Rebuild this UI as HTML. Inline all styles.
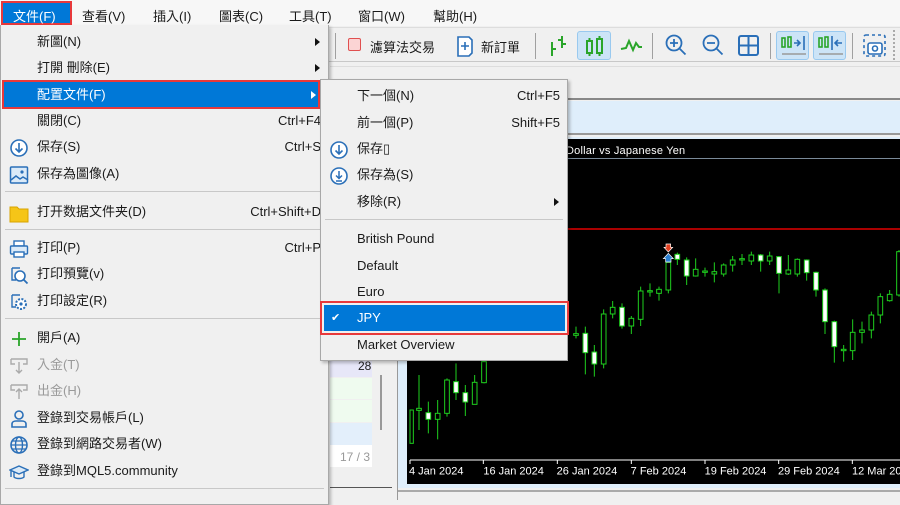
<!DOCTYPE html>
<html><head><meta charset="utf-8">
<style>
*{margin:0;padding:0;box-sizing:border-box}
body{width:900px;height:500px;overflow:hidden;background:#f0f0f0;position:relative;font-family:"Liberation Sans","Noto Sans CJK TC",sans-serif;font-size:13px;color:#1a1a1a}
.abs{position:absolute}
.mb{position:absolute;top:0;left:0;width:900px;height:26px;background:#f7f7f7}
.mb span{position:absolute;top:6px;font-size:13px}
.tb{position:absolute;top:27px;left:0;width:900px;height:35px;background:#f0f0f0;border-top:1px solid #ddd;border-bottom:1px solid #c8c8c8}
.sep{position:absolute;top:33px;width:1px;height:26px;background:#a0a0a0}
.hl{position:absolute;top:31px;height:29px;background:#cce4f7;border:1px solid #99c9ef;border-radius:3px}
.menu{position:absolute;background:#f0f0f0;border:1px solid #a8a8a8;box-shadow:2px 2px 3px rgba(0,0,0,.25)}
.it{position:absolute;left:0;right:0;height:26px;line-height:26px}
.it .t{position:absolute;left:36px}
.it .s{position:absolute;right:7px}
.it .ar{position:absolute;right:8px;top:9px;width:0;height:0;border-left:5px solid #111;border-top:4px solid transparent;border-bottom:4px solid transparent}
.msep{position:absolute;left:4px;right:4px;height:1px;background:#c8c8c8}
.dis{color:#9a9a9a}
.ic{position:absolute;left:8px;top:4px}
</style></head><body>

<div class="mb">
 <div class="abs" style="left:1px;top:1px;width:71px;height:24px;border:2px solid #e8393b;background:#0078d7"></div>
 <span style="left:13px;color:#fff">文件(F)</span>
 <span style="left:82px">查看(V)</span>
 <span style="left:153px">插入(I)</span>
 <span style="left:219px">圖表(C)</span>
 <span style="left:289px">工具(T)</span>
 <span style="left:358px">窗口(W)</span>
 <span style="left:433px">幫助(H)</span>
</div>

<div class="tb"></div>
<div class="sep" style="left:335px"></div>
<div class="abs" style="left:348px;top:38px;width:13px;height:13px;border:1.5px solid #e05050;background:#fbd4d4;border-radius:2px"></div>
<span class="abs" style="left:370px;top:37px">濾算法交易</span>
<svg class="abs" style="left:456px;top:35px" width="18" height="22"><path d="M2 2h11l3 3v13l-3 3H2z" fill="#fff" stroke="#2a6fb8" stroke-width="1.6"/><path d="M9 7v8M5 11h8" stroke="#2a6fb8" stroke-width="1.6"/></svg>
<span class="abs" style="left:481px;top:37px">新訂單</span>
<div class="sep" style="left:535px"></div>
<svg class="abs" style="left:548px;top:34px" width="20" height="22"><path d="M4 8v14M4 15h4M14 2v12M10 6h4M14 10h4" stroke="#2aa52a" stroke-width="2" fill="none"/></svg>
<div class="hl" style="left:577px;width:34px"></div>
<svg class="abs" style="left:584px;top:33px" width="22" height="26"><rect x="3" y="8" width="5" height="12" fill="none" stroke="#2aa52a" stroke-width="2"/><rect x="13" y="6" width="5" height="14" fill="none" stroke="#2aa52a" stroke-width="2"/><path d="M5.5 5v3M5.5 20v3M15.5 3v3M15.5 20v3" stroke="#2aa52a" stroke-width="2"/></svg>
<svg class="abs" style="left:620px;top:36px" width="22" height="18"><path d="M1 13l5-1 3-7 4 9 3-7 3 4h3" stroke="#2aa52a" stroke-width="2" fill="none"/></svg>
<div class="sep" style="left:652px"></div>
<svg class="abs" style="left:664px;top:33px" width="24" height="24"><circle cx="10" cy="10" r="7.5" fill="none" stroke="#2a6fb8" stroke-width="1.8"/><path d="M10 6v8M6 10h8M15.5 15.5l6 6" stroke="#2a6fb8" stroke-width="1.8"/></svg>
<svg class="abs" style="left:701px;top:33px" width="24" height="24"><circle cx="10" cy="10" r="7.5" fill="none" stroke="#2a6fb8" stroke-width="1.8"/><path d="M6 10h8M15.5 15.5l6 6" stroke="#2a6fb8" stroke-width="1.8"/></svg>
<svg class="abs" style="left:738px;top:35px" width="22" height="22"><rect x="1" y="1" width="19" height="19" rx="2" fill="none" stroke="#2a6fb8" stroke-width="2"/><path d="M10.5 1v19M1 10.5h19" stroke="#2a6fb8" stroke-width="2"/></svg>
<div class="sep" style="left:770px"></div>
<div class="hl" style="left:776px;width:33px"></div>
<div class="hl" style="left:813px;width:33px"></div>
<svg class="abs" style="left:780px;top:33px" width="28" height="26"><rect x="2" y="5" width="3" height="9" fill="none" stroke="#2aa52a" stroke-width="1.6"/><rect x="8" y="4" width="3" height="10" fill="none" stroke="#2aa52a" stroke-width="1.6"/><path d="M14 10h6M17 7l3 3-3 3" stroke="#2a6fb8" stroke-width="1.6" fill="none"/><path d="M24 3v14" stroke="#2a6fb8" stroke-width="1.6"/><path d="M2 21h24" stroke="#999" stroke-width="1.6"/></svg>
<svg class="abs" style="left:817px;top:33px" width="28" height="26"><rect x="2" y="5" width="3" height="9" fill="none" stroke="#2aa52a" stroke-width="1.6"/><rect x="8" y="4" width="3" height="10" fill="none" stroke="#2aa52a" stroke-width="1.6"/><path d="M15 3v14" stroke="#2a6fb8" stroke-width="1.6"/><path d="M18 10h7M21 7l-3 3 3 3" stroke="#2a6fb8" stroke-width="1.6" fill="none"/><path d="M2 21h24" stroke="#999" stroke-width="1.6"/></svg>
<div class="sep" style="left:852px"></div>
<svg class="abs" style="left:862px;top:33px" width="26" height="26"><rect x="2" y="2" width="21" height="21" rx="2" fill="none" stroke="#2a6fb8" stroke-width="1.6" stroke-dasharray="3 3"/><rect x="6" y="10" width="14" height="11" rx="2" fill="#fff" stroke="#2a6fb8" stroke-width="1.6"/><circle cx="13" cy="15.5" r="2.5" fill="none" stroke="#2a6fb8" stroke-width="1.6"/></svg>
<div class="abs" style="left:893px;top:30px;width:2px;height:30px;border-left:2px dotted #aaa"></div>

<div class="abs" style="left:328px;top:63px;width:572px;height:437px;background:#f0f0f0"></div>
<div class="abs" style="left:330px;top:66px;width:570px;height:1px;background:#ddd"></div>
<div class="abs" style="left:330px;top:361px;width:42px;height:16px;background:#e7e7f8"></div>
<div class="abs" style="left:330px;top:378px;width:42px;height:21px;background:#effbef"></div>
<div class="abs" style="left:330px;top:400px;width:42px;height:22px;background:#effbef"></div>
<div class="abs" style="left:330px;top:423px;width:42px;height:22px;background:#e3effb"></div>
<div class="abs" style="left:330px;top:445px;width:42px;height:22px;background:#fff"></div>
<span class="abs" style="left:358px;top:359px;font-size:12px">28</span>
<span class="abs" style="left:340px;top:450px;font-size:12px;color:#999">17 / 3</span>
<div class="abs" style="left:380px;top:375px;width:2px;height:55px;background:#999"></div>
<div class="abs" style="left:330px;top:487px;width:62px;height:1px;background:#555"></div>

<div class="abs" style="left:397px;top:98px;width:503px;height:402px;background:#f0f0f0;border-left:1px solid #999;border-top:2px solid #888"></div>
<div class="abs" style="left:398px;top:101px;width:502px;height:34px;background:#dfeefb;border-bottom:2px solid #999"></div>
<div class="abs" style="left:398px;top:137px;width:502px;height:351px;background:#dfeefb"></div>
<div class="abs" style="left:407px;top:139px;width:493px;height:345px;background:#000"></div>
<div class="abs" style="left:407px;top:158px;width:493px;height:1px;background:#7a8a99"></div>
<div class="abs" style="left:407px;top:228px;width:493px;height:2px;background:#a00"></div>
<span class="abs" style="left:566px;top:145px;font-size:11px;color:#fff;letter-spacing:.2px">Dollar vs Japanese Yen</span>
<svg class="abs" style="left:400px;top:230px" width="500" height="270" viewBox="0 0 1500 810">
<g stroke="#1ecf1e" stroke-width="3" fill="#000">
<path d="M35 540V640M57 435V600M85 515V610M113 510V628M141 445V560M168 400V510M196 465V558M224 435V523M252 380V460M528 290V325M556 290V433M583 345V440M611 238V415M638 213V265M666 220V296M694 258V312M722 170V288M750 160V200M777 170V212M805 85V190M832 68V105M860 82V165M887 85V140M915 113V140M943 97V157M971 100V140M998 78V125M1026 72V105M1054 65V105M1082 72V125M1109 65V105M1137 78V190M1165 75V135M1192 85V140M1220 88V152M1248 125V200M1275 175V312M1303 272V398M1331 345V395M1358 268V390M1386 275V340M1414 245V325M1441 190V280M1469 180V215M1497 60V200"/>
<rect x="30" y="540" width="10" height="100"/>
<rect x="50" y="535" width="14" height="6"/>
<rect x="78" y="548" width="14" height="20" fill="#fff"/>
<rect x="106" y="550" width="14" height="18"/>
<rect x="134" y="450" width="14" height="100"/>
<rect x="161" y="455" width="14" height="33" fill="#fff"/>
<rect x="189" y="488" width="14" height="28" fill="#fff"/>
<rect x="217" y="457" width="14" height="66"/>
<rect x="245" y="395" width="14" height="63"/>
<rect x="521" y="311" width="14" height="5"/>
<rect x="549" y="310" width="14" height="58" fill="#fff"/>
<rect x="576" y="366" width="14" height="36" fill="#fff"/>
<rect x="604" y="252" width="14" height="150"/>
<rect x="631" y="232" width="14" height="20"/>
<rect x="659" y="232" width="14" height="56" fill="#fff"/>
<rect x="687" y="265" width="14" height="23"/>
<rect x="715" y="183" width="14" height="85"/>
<rect x="743" y="182" width="14" height="4"/>
<rect x="770" y="178" width="14" height="12"/>
<rect x="798" y="97" width="14" height="83"/>
<rect x="825" y="73" width="14" height="15" fill="#fff"/>
<rect x="853" y="90" width="14" height="48" fill="#fff"/>
<rect x="880" y="118" width="14" height="20"/>
<rect x="908" y="123" width="14" height="4"/>
<rect x="936" y="125" width="14" height="7"/>
<rect x="964" y="105" width="14" height="27"/>
<rect x="991" y="90" width="14" height="15"/>
<rect x="1019" y="86" width="14" height="4"/>
<rect x="1047" y="75" width="14" height="18"/>
<rect x="1075" y="75" width="14" height="18" fill="#fff"/>
<rect x="1102" y="78" width="14" height="15"/>
<rect x="1130" y="80" width="14" height="50" fill="#fff"/>
<rect x="1158" y="120" width="14" height="12"/>
<rect x="1185" y="88" width="14" height="44"/>
<rect x="1213" y="90" width="14" height="38" fill="#fff"/>
<rect x="1241" y="127" width="14" height="53" fill="#fff"/>
<rect x="1268" y="180" width="14" height="95" fill="#fff"/>
<rect x="1296" y="275" width="14" height="75" fill="#fff"/>
<rect x="1324" y="358" width="14" height="4"/>
<rect x="1351" y="307" width="14" height="55"/>
<rect x="1379" y="300" width="14" height="7"/>
<rect x="1407" y="255" width="14" height="45"/>
<rect x="1434" y="200" width="14" height="55"/>
<rect x="1462" y="193" width="14" height="19"/>
<rect x="1490" y="65" width="14" height="130"/>
</g>
<path d="M798 42h14v10h6l-13 14-13-14h6z" fill="#e04020" stroke="#fff" stroke-width="2"/>
<path d="M790 86l15-16 15 16h-7v10h-16v-10z" fill="#2a7fd0" stroke="#fff" stroke-width="2"/>
<path d="M30 690H1500" stroke="#fff" stroke-width="3"/>
<path d="M30 690v12M250 690v12M472 690v12M694 690v12M915 690v12M1136 690v12M1357 690v12" stroke="#fff" stroke-width="3"/>
<g fill="#fff" font-size="33" font-family="Liberation Sans, sans-serif">
<text x="27" y="734">4 Jan 2024</text><text x="250" y="734">16 Jan 2024</text><text x="470" y="734">26 Jan 2024</text><text x="692" y="734">7 Feb 2024</text><text x="914" y="734">19 Feb 2024</text><text x="1134" y="734">29 Feb 2024</text><text x="1356" y="734">12 Mar 2024</text>
</g>
</svg>
<div class="abs" style="left:398px;top:490px;width:502px;height:2px;background:#aaa"></div>

<div class="menu" style="left:0;top:25px;width:329px;height:480px;border-top:none">
 <div class="it" style="top:4px"><span class="t">新圖(N)</span><span class="ar"></span></div>
 <div class="it" style="top:30px"><span class="t">打開 刪除(E)</span><span class="ar"></span></div>
 <div class="abs" style="left:1px;top:55px;width:318px;height:29px;border:2px solid #e8393b;background:#0078d7"></div>
 <div class="it" style="top:57px;color:#fff"><span class="t">配置文件(F)</span><span class="ar" style="border-left-color:#fff;right:12px"></span></div>
 <div class="it" style="top:83px"><span class="t">關閉(C)</span><span class="s">Ctrl+F4</span></div>
 <div class="it" style="top:109px"><svg class="ic" width="20" height="20"><circle cx="10" cy="10" r="8" fill="#fff" stroke="#2a6fb8" stroke-width="1.6"/><path d="M10 5v9M6.5 10.5L10 14l3.5-3.5" stroke="#2a6fb8" stroke-width="1.6" fill="none"/></svg><span class="t">保存(S)</span><span class="s">Ctrl+S</span></div>
 <div class="it" style="top:136px"><svg class="ic" width="20" height="20"><rect x="1.5" y="2" width="17" height="16" rx="1" fill="#dbeaf8" stroke="#2a6fb8" stroke-width="1.5"/><path d="M2 15l5-4 4 3 3-2 5 3" stroke="#2a6fb8" stroke-width="1.5" fill="none"/><circle cx="13" cy="7" r="1.6" fill="#2a6fb8"/></svg><span class="t">保存為圖像(A)</span></div>
 <div class="msep" style="top:166px"></div>
 <div class="it" style="top:174px"><svg class="ic" width="20" height="20" style="top:5px"><path d="M1 3h7l2 2h9v13H1z" fill="#f5c518" stroke="#d9a400"/></svg><span class="t">打开数据文件夹(D)</span><span class="s">Ctrl+Shift+D</span></div>
 <div class="msep" style="top:204px"></div>
 <div class="it" style="top:210px"><svg class="ic" width="20" height="20"><rect x="5" y="2" width="10" height="5" fill="#fff" stroke="#2a6fb8" stroke-width="1.4"/><rect x="1.5" y="7" width="17" height="8" rx="1" fill="#dbeaf8" stroke="#2a6fb8" stroke-width="1.4"/><rect x="5" y="13" width="10" height="5" fill="#fff" stroke="#2a6fb8" stroke-width="1.4"/></svg><span class="t">打印(P)</span><span class="s">Ctrl+P</span></div>
 <div class="it" style="top:236px"><svg class="ic" width="20" height="20"><path d="M3 3h8M3 3v12h4" stroke="#2a6fb8" stroke-width="1.4" fill="none"/><circle cx="11" cy="11" r="5" fill="#fff" stroke="#2a6fb8" stroke-width="1.6"/><path d="M14.5 14.5l4 4" stroke="#2a6fb8" stroke-width="1.8"/></svg><span class="t">打印預覽(v)</span></div>
 <div class="it" style="top:263px"><svg class="ic" width="20" height="20"><path d="M3 3h8M3 3v12h4" stroke="#2a6fb8" stroke-width="1.4" fill="none"/><circle cx="12" cy="12" r="5" fill="#fff" stroke="#2a6fb8" stroke-width="2" stroke-dasharray="2 1.4"/><circle cx="12" cy="12" r="1.6" fill="#2a6fb8"/></svg><span class="t">打印設定(R)</span></div>
 <div class="msep" style="top:293px"></div>
 <div class="it" style="top:300px"><svg class="ic" width="20" height="20"><path d="M10 3v14M3 10h14" stroke="#2aa52a" stroke-width="1.8"/></svg><span class="t">開戶(A)</span></div>
 <div class="it dis" style="top:327px"><svg class="ic" width="20" height="20"><path d="M2 3h16v5h-4M2 3v5h4M10 6v11M7 14l3 3 3-3" stroke="#aaa" stroke-width="1.4" fill="none"/></svg><span class="t">入金(T)</span></div>
 <div class="it dis" style="top:353px"><svg class="ic" width="20" height="20"><path d="M2 3h16v5h-4M2 3v5h4M10 17V7M7 10l3-3 3 3" stroke="#aaa" stroke-width="1.4" fill="none"/></svg><span class="t">出金(H)</span></div>
 <div class="it" style="top:380px"><svg class="ic" width="20" height="20"><circle cx="10" cy="6" r="4" fill="none" stroke="#2a6fb8" stroke-width="1.6"/><path d="M3 18v-3c0-2 2-3 4-3h6c2 0 4 1 4 3v3z" fill="none" stroke="#2a6fb8" stroke-width="1.6"/></svg><span class="t">登錄到交易帳戶(L)</span></div>
 <div class="it" style="top:406px"><svg class="ic" width="20" height="20"><circle cx="10" cy="10" r="8" fill="none" stroke="#2a6fb8" stroke-width="1.6"/><ellipse cx="10" cy="10" rx="3.5" ry="8" fill="none" stroke="#2a6fb8" stroke-width="1.4"/><path d="M2 10h16M3.5 6h13M3.5 14h13" stroke="#2a6fb8" stroke-width="1.3"/></svg><span class="t">登錄到網路交易者(W)</span></div>
 <div class="it" style="top:433px"><svg class="ic" width="20" height="20"><path d="M1 8l9-4 9 4-9 4z" fill="#dbeaf8" stroke="#2a6fb8" stroke-width="1.4"/><path d="M5 10v5c2 2 8 2 10 0v-5M2 9v6" stroke="#2a6fb8" stroke-width="1.4" fill="none"/></svg><span class="t">登錄到MQL5.community</span></div>
 <div class="msep" style="top:463px"></div>
</div>

<div class="menu" style="left:320px;top:79px;width:248px;height:282px">
 <div class="it" style="top:3px"><span class="t">下一個(N)</span><span class="s">Ctrl+F5</span></div>
 <div class="it" style="top:30px"><span class="t">前一個(P)</span><span class="s">Shift+F5</span></div>
 <div class="it" style="top:56px"><svg class="ic" width="20" height="20"><circle cx="10" cy="10" r="8" fill="#fff" stroke="#2a6fb8" stroke-width="1.6"/><path d="M10 5v9M6.5 10.5L10 14l3.5-3.5" stroke="#2a6fb8" stroke-width="1.6" fill="none"/></svg><span class="t">保存▯</span></div>
 <div class="it" style="top:82px"><svg class="ic" width="20" height="20"><circle cx="10" cy="10" r="8" fill="#fff" stroke="#2a6fb8" stroke-width="1.6"/><path d="M10 5v7M7 9.5L10 12.5l3-3M7 15h6" stroke="#2a6fb8" stroke-width="1.5" fill="none"/></svg><span class="t">保存為(S)</span></div>
 <div class="it" style="top:109px"><span class="t">移除(R)</span><span class="ar"></span></div>
 <div class="msep" style="top:139px"></div>
 <div class="it" style="top:146px"><span class="t">British Pound</span></div>
 <div class="it" style="top:173px"><span class="t">Default</span></div>
 <div class="it" style="top:199px"><span class="t">Euro</span></div>
 <div class="abs" style="left:-1px;top:221px;width:249px;height:34px;border:2px solid #e8393b;background:#0078d7;box-shadow:inset 0 0 0 2px #f0f0f0"></div>
 <div class="abs" style="left:3px;top:225px;width:241px;height:26px;background:#0078d7"></div>
 <div class="it" style="top:225px;color:#fff"><span class="abs" style="left:10px;font-size:11px">✔</span><span class="t">JPY</span></div>
 <div class="it" style="top:252px"><span class="t">Market Overview</span></div>
</div>

</body></html>
